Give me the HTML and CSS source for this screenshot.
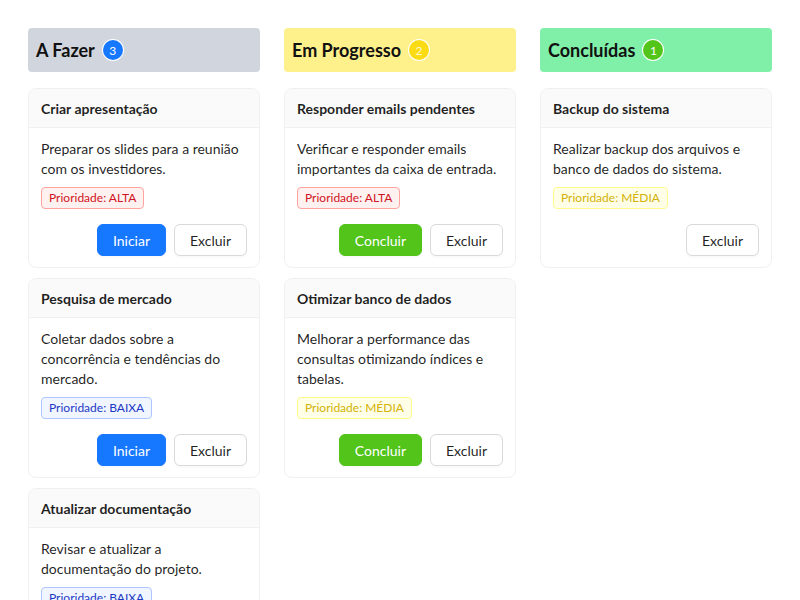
FILE: index.html
```html
<!DOCTYPE html>
<html lang="pt">
<head>
<meta charset="utf-8">
<link rel="stylesheet" href="styles.css">
</head>
<body>
<div class="board">
  <section class="column">
    <header class="col-head todo"><h2>A Fazer</h2><span class="count c-blue">3</span></header>
    <div class="card">
      <div class="card-head">Criar apresentação</div>
      <div class="card-body">
        <p>Preparar os slides para a reunião com os investidores.</p>
        <span class="tag alta">Prioridade: ALTA</span>
        <div class="actions"><button class="btn primary">Iniciar</button><button class="btn">Excluir</button></div>
      </div>
    </div>
    <div class="card">
      <div class="card-head">Pesquisa de mercado</div>
      <div class="card-body">
        <p>Coletar dados sobre a concorrência e tendências do mercado.</p>
        <span class="tag baixa">Prioridade: BAIXA</span>
        <div class="actions"><button class="btn primary">Iniciar</button><button class="btn">Excluir</button></div>
      </div>
    </div>
    <div class="card">
      <div class="card-head">Atualizar documentação</div>
      <div class="card-body">
        <p>Revisar e atualizar a documentação do projeto.</p>
        <span class="tag baixa">Prioridade: BAIXA</span>
        <div class="actions"><button class="btn primary">Iniciar</button><button class="btn">Excluir</button></div>
      </div>
    </div>
  </section>
  <section class="column">
    <header class="col-head progress"><h2>Em Progresso</h2><span class="count c-yellow">2</span></header>
    <div class="card">
      <div class="card-head">Responder emails pendentes</div>
      <div class="card-body">
        <p>Verificar e responder emails importantes da caixa de entrada.</p>
        <span class="tag alta">Prioridade: ALTA</span>
        <div class="actions"><button class="btn success">Concluir</button><button class="btn">Excluir</button></div>
      </div>
    </div>
    <div class="card">
      <div class="card-head">Otimizar banco de dados</div>
      <div class="card-body">
        <p>Melhorar a performance das consultas otimizando índices e tabelas.</p>
        <span class="tag media">Prioridade: MÉDIA</span>
        <div class="actions"><button class="btn success">Concluir</button><button class="btn">Excluir</button></div>
      </div>
    </div>
  </section>
  <section class="column">
    <header class="col-head done"><h2>Concluídas</h2><span class="count c-green">1</span></header>
    <div class="card">
      <div class="card-head">Backup do sistema</div>
      <div class="card-body">
        <p>Realizar backup dos arquivos e banco de dados do sistema.</p>
        <span class="tag media">Prioridade: MÉDIA</span>
        <div class="actions"><button class="btn">Excluir</button></div>
      </div>
    </div>
  </section>
</div>
</body>
</html>
```
FILE: styles.css
```css
* { box-sizing: border-box; }
html, body { margin: 0; background: #fff; }
body {
  font-family: "Lato", "Roboto", sans-serif;
  color: rgba(0,0,0,0.88);
  font-size: 14px;
}
.board {
  display: grid;
  grid-template-columns: repeat(3, 232px);
  gap: 24px;
  padding: 28px;
  align-items: start;
}
.column { display: flex; flex-direction: column; gap: 10px; }
.col-head {
  height: 44px;
  border-radius: 4px;
  display: flex;
  align-items: center;
  gap: 8px;
  padding: 0 8px;
  margin-bottom: 6px;
}
.col-head h2 { margin: 0; font-size: 18px; font-weight: 700; color: #111; }
.todo { background: #d1d5de; }
.progress { background: #fef08a; }
.done { background: #80f0a8; }
.count {
  width: 20px; height: 20px; border-radius: 50%;
  display: inline-flex; align-items: center; justify-content: center;
  font-size: 12px; color: #fff;
  box-shadow: 0 0 0 1px #fff;
}
.c-blue { background: #1677ff; }
.c-yellow { background: #fadb14; color: #fff7cc; }
.c-green { background: #52c41a; }
.card {
  border: 1px solid #f0f0f0;
  border-radius: 8px;
  background: #fff;
  overflow: hidden;
}
.card-head {
  background: #fafafa;
  border-bottom: 1px solid #f0f0f0;
  height: 39px;
  display: flex; align-items: center;
  padding: 0 12px;
  font-weight: 700;
  font-size: 14px;
}
.card-body { padding: 11px 12px 11px; }
.card-body p { margin: 0; line-height: 20px; }
.tag {
  display: inline-block;
  margin-top: 8px;
  font-size: 12px;
  line-height: 20px;
  padding: 0 7px;
  border: 1px solid;
  border-radius: 4px;
}
.alta { background: #fff1f0; border-color: #ffa39e; color: #cf1322; }
.baixa { background: #f0f5ff; border-color: #adc6ff; color: #1d39c4; }
.media { background: #feffe6; border-color: #fffb8f; color: #d4b106; }
.actions {
  display: flex; justify-content: flex-end; gap: 8px;
  margin-top: 15px;
}
.btn {
  font-family: inherit;
  font-size: 14px;
  height: 32px;
  padding: 0 15px;
  border-radius: 6px;
  border: 1px solid #d9d9d9;
  background: #fff;
  color: rgba(0,0,0,0.88);
  box-shadow: 0 2px 0 rgba(0,0,0,0.02);
}
.primary { background: #1677ff; border-color: #1677ff; color: #fff; }
.success { background: #52c41a; border-color: #52c41a; color: #fff; }
```
